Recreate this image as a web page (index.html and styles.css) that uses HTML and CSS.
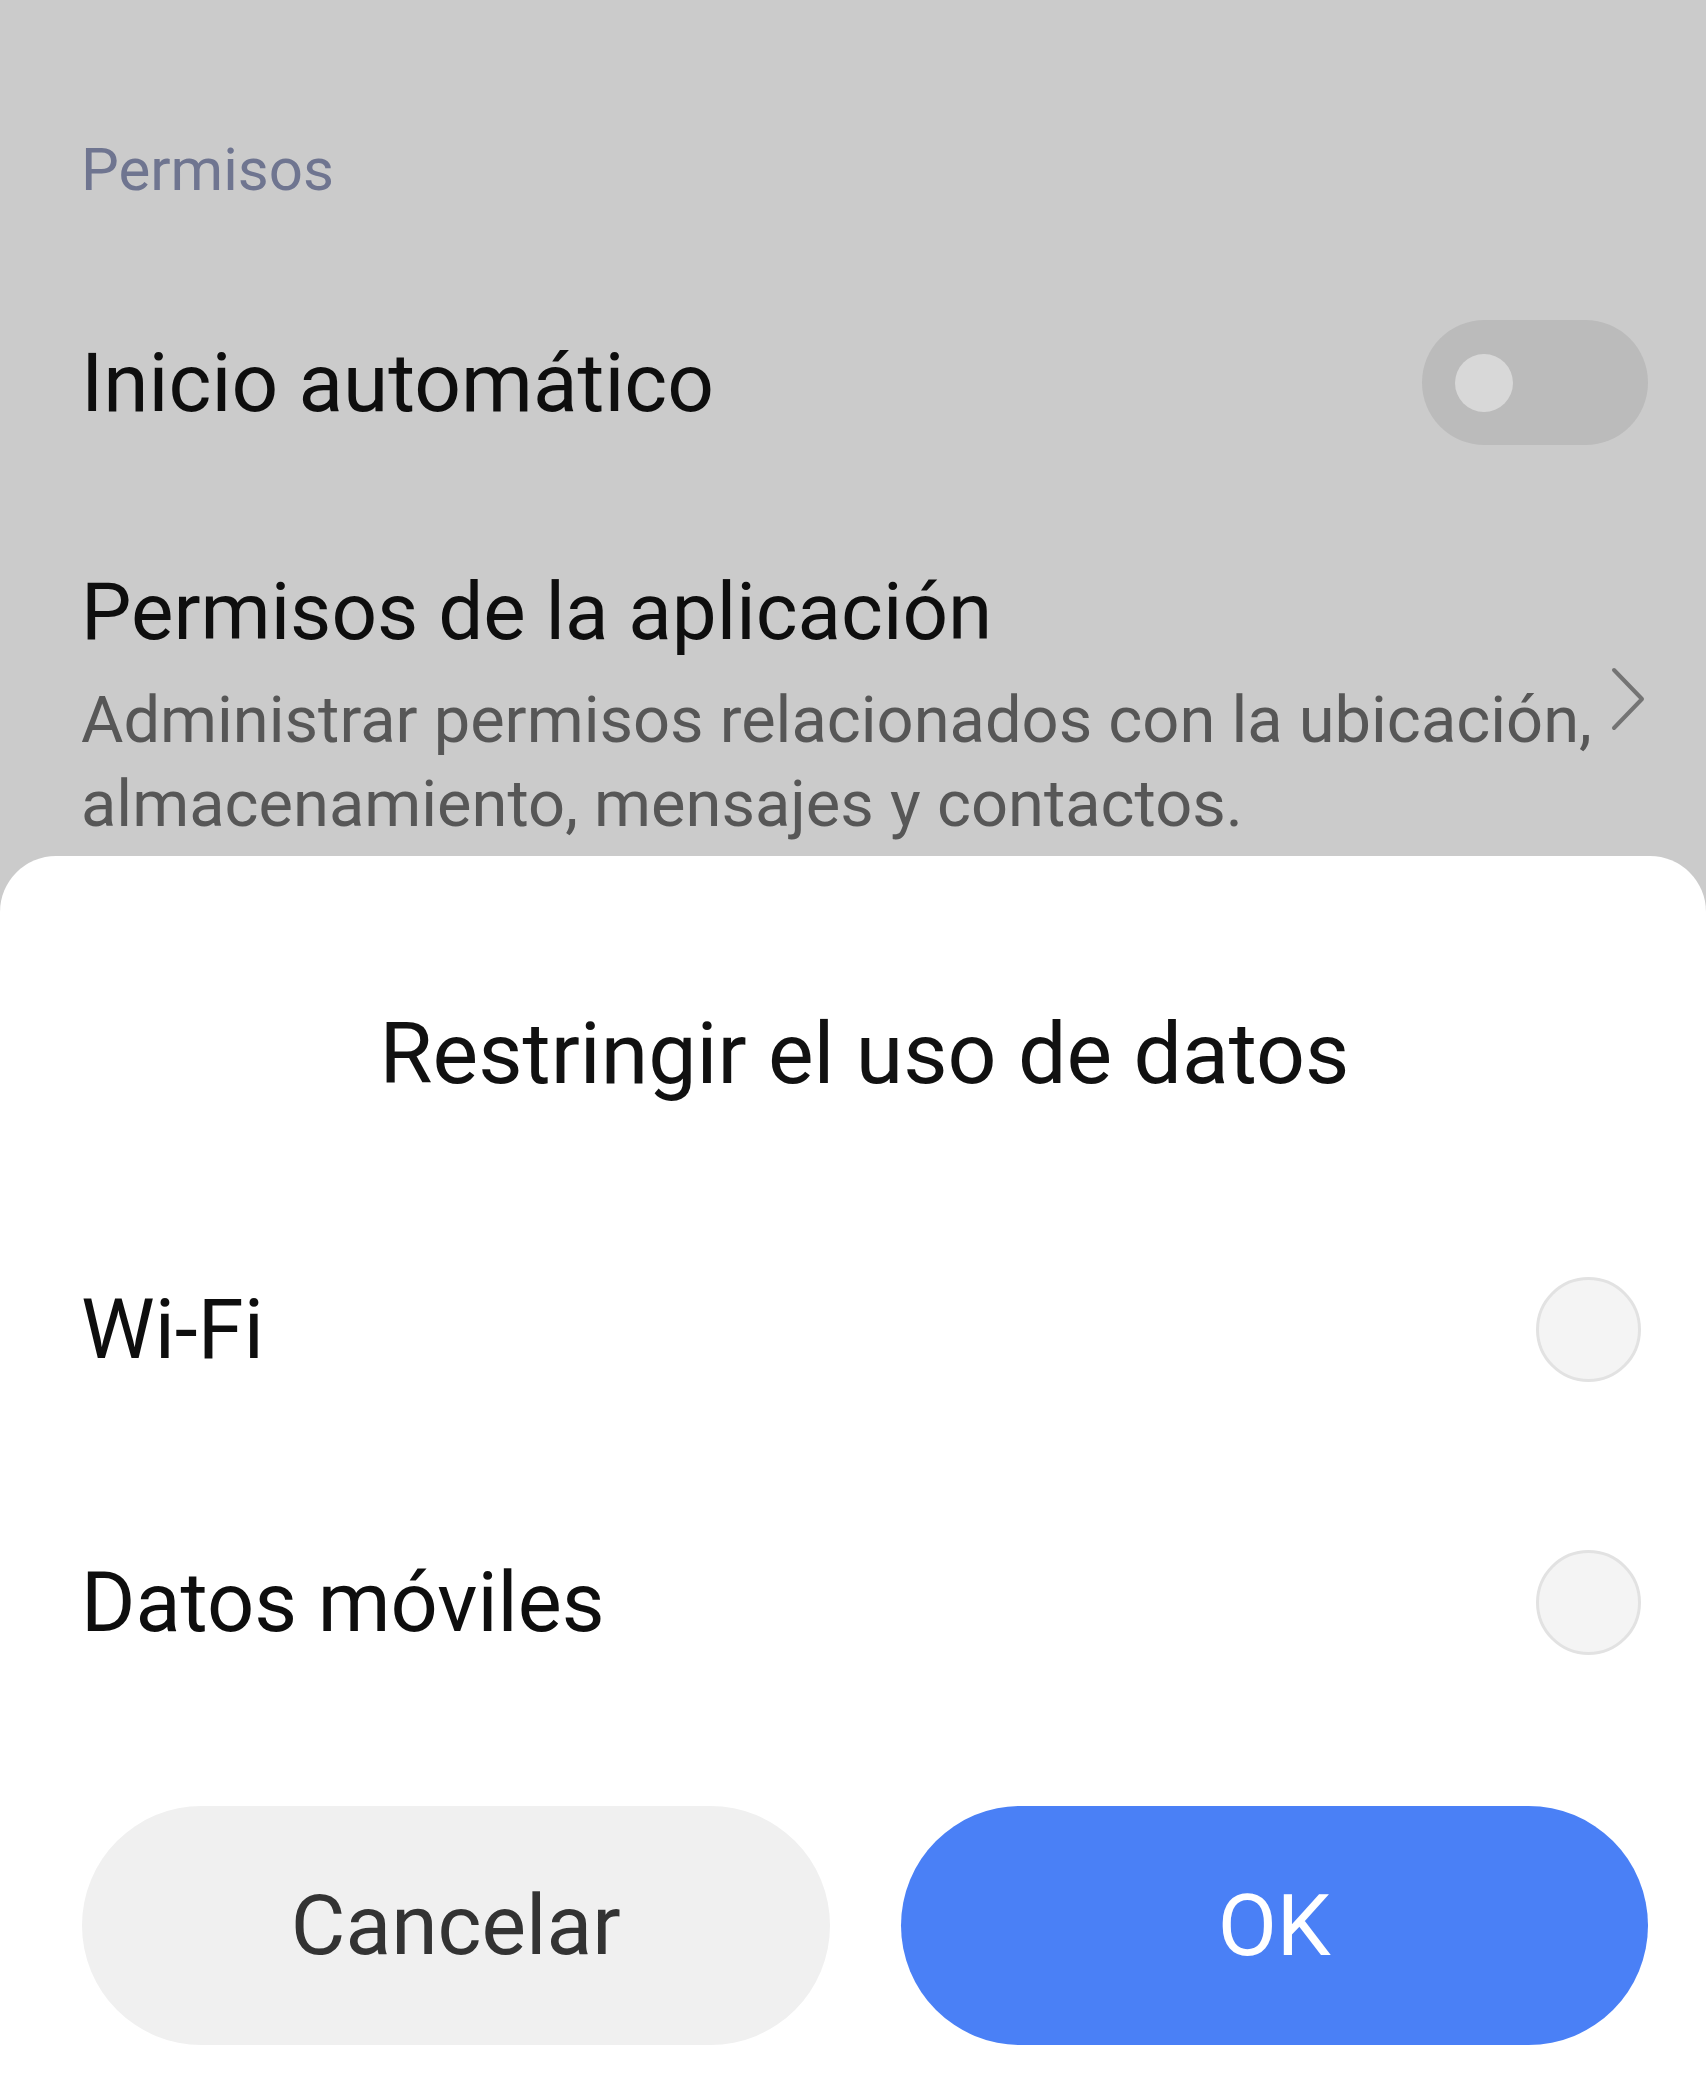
FILE: index.html
```html
<!DOCTYPE html>
<html lang="es">
<head>
<meta charset="utf-8">
<title>Restringir el uso de datos</title>
<link rel="stylesheet" href="styles.css">
</head>
<body>
<div class="screen">
  <section class="settings">
    <div class="section-title">Permisos</div>
    <div class="toggle-row">
      <div class="item-title">Inicio automático</div>
      <div class="toggle"><span class="knob"></span></div>
    </div>
    <div class="link-row">
      <div class="link-text">
        <div class="item-title">Permisos de la aplicación</div>
        <div class="item-desc">Administrar permisos relacionados con la ubicación, almacenamiento, mensajes y contactos.</div>
      </div>
      <svg class="chevron" width="36" height="64" viewBox="0 0 36 64" aria-hidden="true">
        <polyline points="4,3 32,32 4,61" fill="none" stroke="#747474" stroke-width="4" stroke-linecap="round" stroke-linejoin="round"/>
      </svg>
    </div>
  </section>
  <section class="sheet">
    <h1 class="sheet-title">Restringir el uso de datos</h1>
    <div class="options">
      <div class="option">
        <span class="option-label">Wi-Fi</span>
        <span class="radio"></span>
      </div>
      <div class="option">
        <span class="option-label">Datos móviles</span>
        <span class="radio"></span>
      </div>
    </div>
    <div class="buttons">
      <button class="btn btn-cancel">Cancelar</button>
      <button class="btn btn-ok">OK</button>
    </div>
  </section>
</div>
</body>
</html>
```
FILE: styles.css
```css
html, body {
  margin: 0;
  padding: 0;
}

body {
  background: #cbcbcb;
  font-family: Roboto, "Liberation Sans", Arial, sans-serif;
  color: #111111;
}

.screen {
  width: 1706px;
  min-height: 2099px;
  display: flex;
  flex-direction: column;
}

.settings {
  height: 856px;
  box-sizing: border-box;
  padding: 130px 58px 0 81px;
}

.section-title {
  font-size: 60px;
  line-height: 80px;
  color: #6f7590;
}

.toggle-row {
  margin-top: 110px;
  height: 125px;
  display: flex;
  align-items: center;
  justify-content: space-between;
}

.item-title {
  font-size: 82px;
  line-height: 90px;
  color: #0e0e0e;
}

.link-row .item-title {
  font-size: 80px;
}

.toggle {
  width: 226px;
  height: 125px;
  border-radius: 63px;
  background: #bbbbbb;
  display: flex;
  align-items: center;
  padding-left: 33px;
  box-sizing: border-box;
}

.knob {
  width: 58px;
  height: 58px;
  border-radius: 50%;
  background: #d8d8d8;
}

.link-row {
  margin-top: 122px;
  display: flex;
  align-items: flex-start;
  justify-content: space-between;
  gap: 12px;
}

.link-text {
  flex: 1;
}

.item-desc {
  margin-top: 21px;
  font-size: 65px;
  line-height: 84px;
  color: #575757;
}

.chevron {
  flex: none;
  margin-top: 100px;
  margin-right: 2px;
}

.sheet {
  flex: 1;
  background: #ffffff;
  border-radius: 56px 56px 0 0;
  padding: 148px 58px 54px 81px;
  display: flex;
  flex-direction: column;
}

.sheet-title {
  margin: 0;
  font-weight: 400;
  font-size: 86px;
  line-height: 100px;
  text-align: center;
  color: #111111;
}

.options {
  margin-top: 89px;
}

.option {
  height: 273px;
  display: flex;
  align-items: center;
  justify-content: space-between;
}

.option-label {
  font-size: 83px;
  line-height: 100px;
  color: #0e0e0e;
}

.radio {
  width: 105px;
  height: 105px;
  box-sizing: border-box;
  border-radius: 50%;
  background: #f4f4f4;
  border: 3px solid #e2e2e2;
  margin-right: 7px;
}

.buttons {
  margin-top: 67px;
  display: grid;
  grid-template-columns: 1fr 1fr;
  gap: 71px;
  padding-left: 1px;
}

.btn {
  height: 239px;
  border: none;
  border-radius: 120px;
  font-family: Roboto, "Liberation Sans", Arial, sans-serif;
  font-size: 84px;
  font-weight: 400;
  padding: 0;
}

.btn-cancel {
  background: #f0f0f0;
  color: #333333;
}

.btn-ok {
  background: #4a80f6;
  color: #ffffff;
  font-size: 86px;
}
```
